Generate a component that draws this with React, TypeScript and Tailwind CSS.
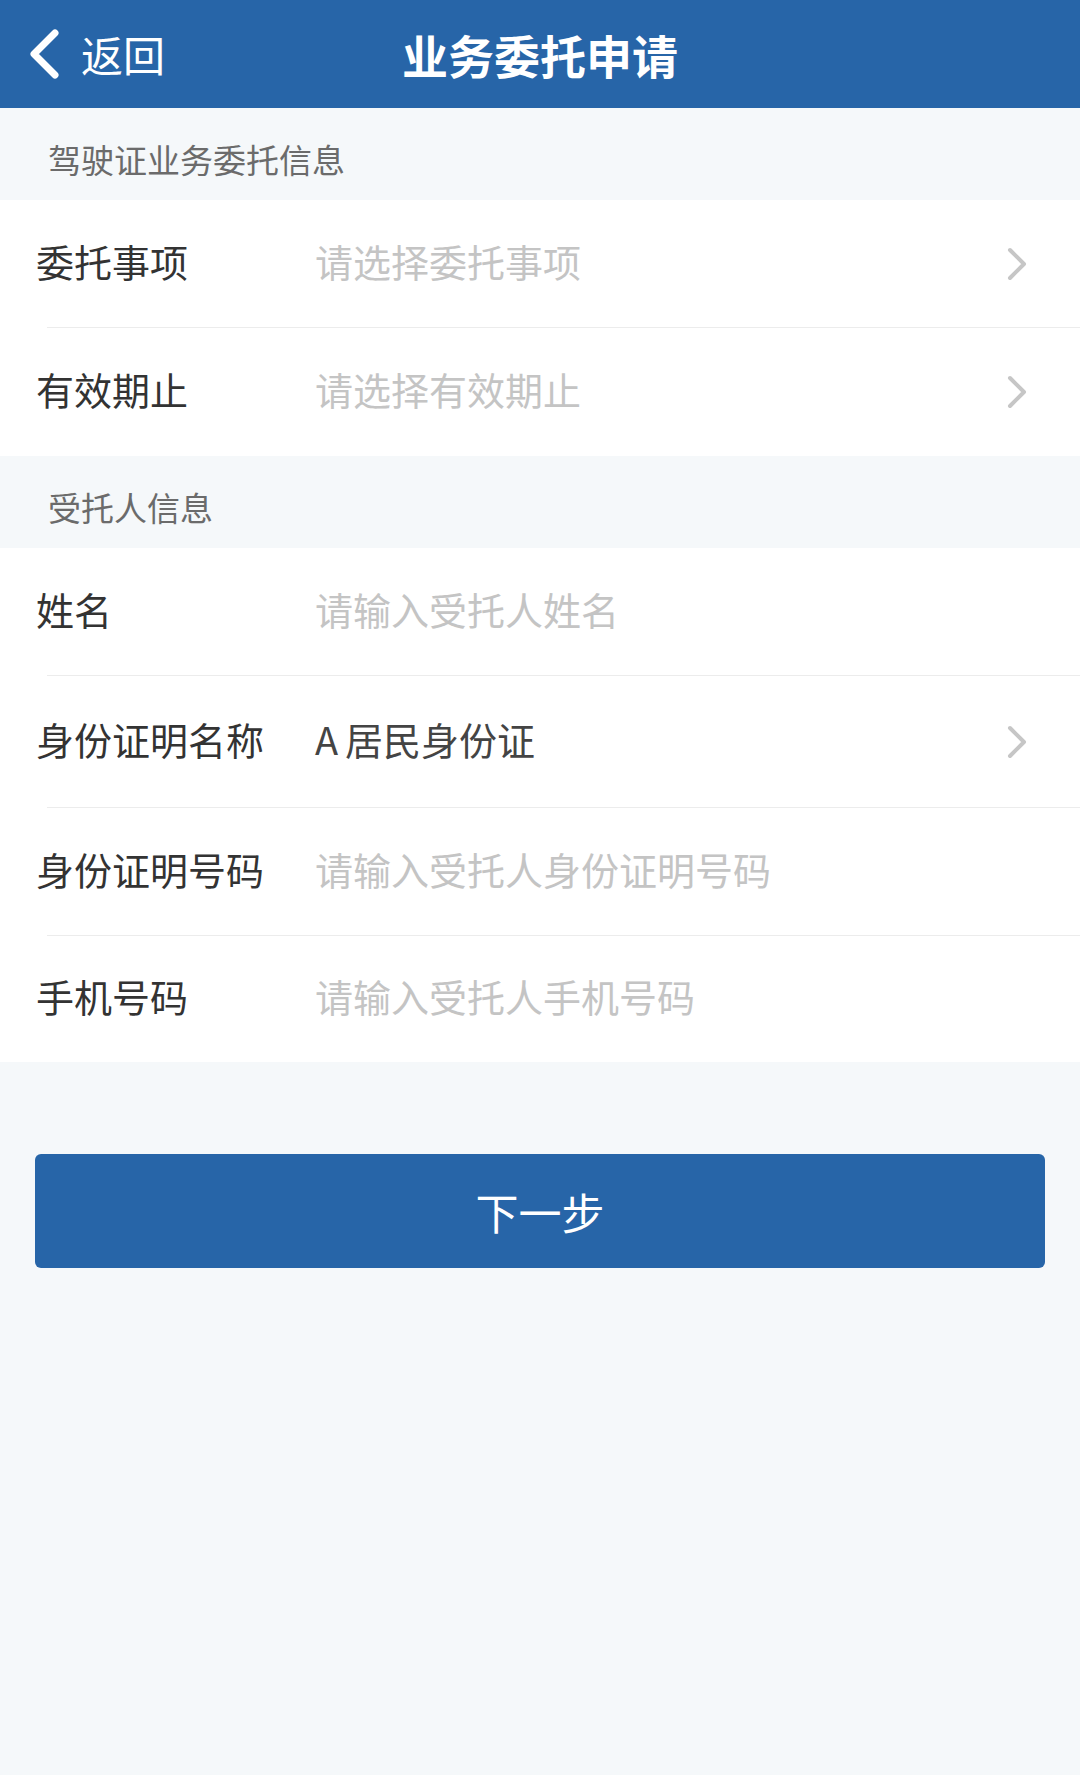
import React from 'react'

const FONT = { fontFamily: '"Noto Sans CJK SC", "Noto Sans", sans-serif' }

function Chevron() {
  return (
    <svg width="22" height="34" viewBox="0 0 22 34" className="shrink-0">
      <polyline
        points="4,3 18,17 4,31"
        fill="none"
        stroke="#c6c6c6"
        strokeWidth="4"
        strokeLinecap="round"
        strokeLinejoin="round"
      />
    </svg>
  )
}

function SectionTitle({ text }: { text: string }) {
  return (
    <div className="h-[92px] pl-[48px] pt-[35px] text-[33px] leading-none text-[#6b6b6b]">
      {text}
    </div>
  )
}

interface RowProps {
  label: string
  value?: React.ReactNode
  placeholder?: string
  arrow?: boolean
  h?: string
}

function Row({ label, value, placeholder, arrow, h = 'h-[127px]' }: RowProps) {
  return (
    <div className={`flex items-center ${h} pl-[36px] pr-[52px]`}>
      <div className="w-[279px] shrink-0 pb-[6px] text-[38px] leading-none text-[#333333]">{label}</div>
      <div className="flex-1 pb-[6px] text-[38px] leading-none">
        {value ? (
          <span className="text-[#444444]">{value}</span>
        ) : (
          <span className="text-[#c4c4c4]">{placeholder}</span>
        )}
      </div>
      {arrow && <Chevron />}
    </div>
  )
}

function Divider() {
  return <div className="ml-[47px] h-px bg-[#ececec]" />
}

export default function App() {
  return (
    <div className="min-h-[1775px] w-full bg-[#f5f8fa]" style={FONT}>
      {/* Nav bar */}
      <div className="relative flex h-[108px] items-center bg-[#2765a8]">
        <div className="flex items-center pl-[27px]">
          <svg width="34" height="52" viewBox="0 0 34 52">
            <polyline
              points="28,5 7,26 28,47"
              fill="none"
              stroke="#ffffff"
              strokeWidth="7"
              strokeLinecap="round"
              strokeLinejoin="round"
            />
          </svg>
          <span className="ml-[20px] text-[42px] leading-none text-white">返回</span>
        </div>
        <div className="absolute left-1/2 -translate-x-1/2 text-[46px] font-bold leading-none text-white">
          业务委托申请
        </div>
      </div>

      <SectionTitle text="驾驶证业务委托信息" />
      <div className="bg-white">
        <Row label="委托事项" placeholder="请选择委托事项" arrow />
        <Divider />
        <Row label="有效期止" placeholder="请选择有效期止" arrow h="h-[128px]" />
      </div>

      <SectionTitle text="受托人信息" />
      <div className="bg-white">
        <Row label="姓名" placeholder="请输入受托人姓名" />
        <Divider />
        <Row
          label="身份证明名称"
          value={
            <>
              <span className="mr-[7px]">A</span>居民身份证
            </>
          }
          arrow
          h="h-[131px]"
        />
        <Divider />
        <Row label="身份证明号码" placeholder="请输入受托人身份证明号码" />
        <Divider />
        <Row label="手机号码" placeholder="请输入受托人手机号码" h="h-[126px]" />
      </div>

      <div className="px-[35px] pt-[92px]">
        <button className="flex h-[114px] w-full items-center justify-center rounded-[6px] bg-[#2765a8] text-[43px] leading-none text-white">
          下一步
        </button>
      </div>
    </div>
  )
}
